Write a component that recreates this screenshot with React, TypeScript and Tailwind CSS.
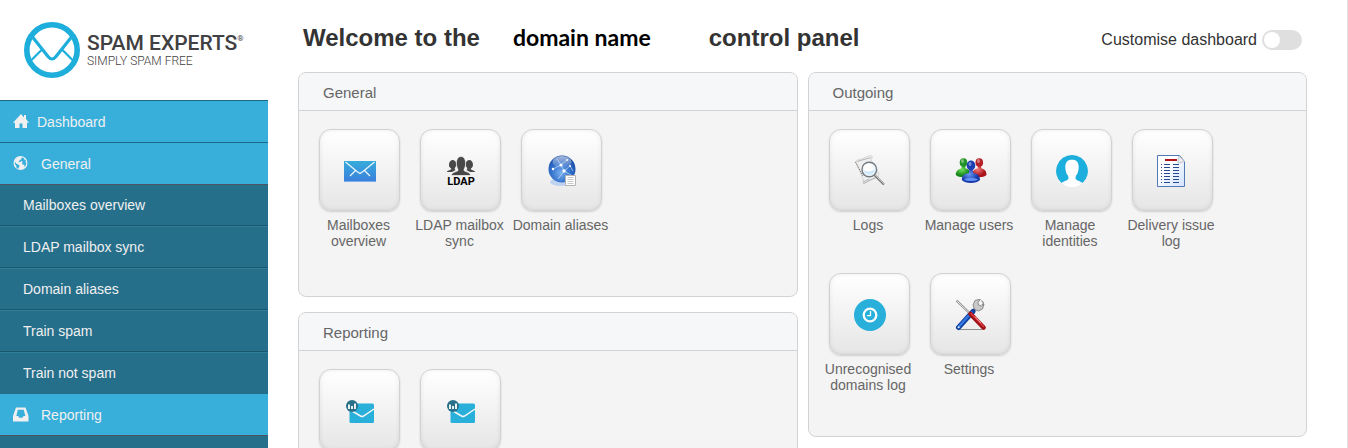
import { ReactNode, useState } from 'react'

type Tile = { label: string; icon: ReactNode }

const HomeIcon = () => (
  <svg viewBox="0 0 16 16" className="h-4 w-4" fill="currentColor">
    <path d="M8 0 0 8.700h2V14h4.500V9.500h3V14H14V8.700h2L13 5V1h-2v2.500z" />
  </svg>
)

const GlobeIcon = () => (
  <svg viewBox="0 0 16 16" className="h-4 w-4">
    <circle cx="7.500" cy="7" r="7" fill="#f0f0f0" />
    <g fill="#38afdb">
      <path d="M2 5.500 3 7.500l2 .8 1.500 1.500-.3 1.500-1 1 .2 1-1.700-1.200L3 9.500 1.800 8z" />
      <path d="M9 1.200 8.300 3 6.800 4.300 5.500 5.800l1.300.4L8.500 5l1.200.8L9 7.200l.5 1.300 1.800.3.300 2.400 1.300-2.200.5-2-1-1.200.6-1.500-1.500-.5-.4-1.500z" />
    </g>
  </svg>
)

const InboxIcon = () => (
  <svg viewBox="0 0 16 16" className="h-4 w-4" fill="currentColor" fillRule="evenodd">
    <path d="M3 .5h9.500L15.500 9v5.500H0V9zM4.800 2.800 3.300 9h1.900l1 1.800h3.300l1-1.800h1.900L10.700 2.800z" />
  </svg>
)

const MailIcon = () => (
  <svg viewBox="0 0 32 32" className="h-8 w-8">
    <defs>
      <linearGradient id="mail" x1="0" y1="0" x2="0" y2="1">
        <stop offset="0" stopColor="#35acdb" />
        <stop offset="1" stopColor="#3b7edb" />
      </linearGradient>
    </defs>
    <path d="M0 6h32v21H0z" fill="url(#mail)" />
    <path d="M0 26.500h32" stroke="#7fabe8" />
    <path d="M1.500 7 13 16.500l3 2 3-2L30.500 7M11.500 15.500 6 21M20.500 15.500 26 21" fill="none" stroke="#eef7fd" strokeWidth="1.200" />
  </svg>
)

const LdapIcon = () => (
  <svg viewBox="0 0 32 32" className="h-8 w-8">
    <g fill="#484848">
      <path d="M2 17c0-1.500 3-1.800 4.200-2.800.3-.6-.6-1.300-1.200-1.800C3 11 4 5 7.700 5c3.800 0 4.300 5.500 2.500 7.400-.8 1-.5 2 .4 2.600L7 17z" />
      <path d="M30 17c0-1.500-3-1.800-4.200-2.800-.3-.6.6-1.300 1.200-1.800C29 11 28 5 24.300 5c-3.800 0-4.300 5.500-2.500 7.400.8 1 .5 2-.4 2.600L25 17z" />
      <path d="M6.500 20.500c0-3.500 5-3.500 6.500-5 .4-.8-.6-2-1-3.200C10.800 9 11 1.500 16 1.500s5.200 7.500 4 10.800c-.4 1.200-1.400 2.400-1 3.200 1.500 1.500 6.500 1.500 6.500 5z" stroke="#f7f7f7" strokeWidth=".7" />
    </g>
    <text x="16" y="30" textAnchor="middle" fontSize="11" fontWeight="700" fontFamily="Roboto, sans-serif" fill="#000">
      LDAP
    </text>
  </svg>
)

const AliasIcon = () => (
  <svg viewBox="0 0 32 32" className="h-8 w-8">
    <defs>
      <radialGradient id="globe" cx=".45" cy=".65" r=".65">
        <stop offset="0" stopColor="#76aff0" />
        <stop offset=".55" stopColor="#3471cb" />
        <stop offset="1" stopColor="#174ba5" />
      </radialGradient>
      <linearGradient id="shine" x1="0" y1="0" x2="0" y2="1">
        <stop offset="0" stopColor="#fff" stopOpacity=".6" />
        <stop offset="1" stopColor="#fff" stopOpacity=".05" />
      </linearGradient>
    </defs>
    <ellipse cx="15" cy="27" rx="11" ry="4" fill="#bfd2f0" />
    <circle cx="16" cy="14" r="13.500" fill="url(#globe)" />
    <ellipse cx="16" cy="7" rx="9.500" ry="6" fill="url(#shine)" />
    <path d="M7 14l8-4 3 6 6-5M15 10l-4-6M15 10l6-5M18 16l-6 8M18 16l7 4M24 11l3 5" stroke="#d9e9ff" strokeWidth=".6" fill="none" />
    <g fill="#fff">
      <circle cx="15" cy="10" r="1.500" />
      <circle cx="18" cy="16" r="1.700" />
      <circle cx="7" cy="14" r="1.200" />
      <circle cx="24" cy="11" r="1" />
      <circle cx="21" cy="5" r=".9" />
    </g>
    <path d="M19.500 20.500h10v10h-10z" fill="#fff" stroke="#b5b5b5" />
    <path d="M21.500 22.500h6M21.500 24.500h6M21.500 26.500h6M21.500 28.500h6" stroke="#bbb" strokeWidth=".8" />
  </svg>
)

const LogsIcon = () => (
  <svg viewBox="0 0 32 32" className="h-8 w-8">
    <path d="M1.500 7C2 4.500 5 5 8 4l7-3.300c2-.7 3.500 0 3.200 2L17 5l8 14-1 3-9 3-4.500 3.500-1.500-.3.500-3.200z" fill="#efefef" stroke="#c8c8c8" strokeWidth=".7" />
    <path d="M1.500 7 9 21" stroke="#777" strokeWidth="1" strokeDasharray="1.500 1" />
    <path d="M3 6.500 17 2.500M9 27l6-3M9.500 28.500 23 22" stroke="#a8a8a8" strokeWidth=".8" />
    <path d="M20.500 20 30 29.500" stroke="#777" strokeWidth="2.200" />
    <path d="M21 20 30 29" stroke="#d5d5d5" strokeWidth=".8" />
    <circle cx="15.300" cy="14.500" r="7.300" fill="#eaf5fe" stroke="#747b80" strokeWidth="1.400" />
    <path d="M10 16a5.800 5.800 0 0 0 10.600 0c-3-1.500-7-1.500-10.600 0z" fill="#cfe8fb" />
    <ellipse cx="14.500" cy="12.500" rx="5" ry="4" fill="#fff" />
  </svg>
)

const UsersIcon = () => (
  <svg viewBox="0 0 32 32" className="h-8 w-8">
    <defs>
      <radialGradient id="green" cx=".4" cy=".35">
        <stop offset="0" stopColor="#72e35a" />
        <stop offset="1" stopColor="#15851a" />
      </radialGradient>
      <radialGradient id="red" cx=".4" cy=".35">
        <stop offset="0" stopColor="#f27b7b" />
        <stop offset="1" stopColor="#ac141c" />
      </radialGradient>
      <radialGradient id="blue" cx=".4" cy=".35">
        <stop offset="0" stopColor="#6b9cf5" />
        <stop offset="1" stopColor="#1537a8" />
      </radialGradient>
    </defs>
    <g fill="url(#green)">
      <path d="M.8 20c0-4 2.500-6 5.500-6.500l.7-3h3l.7 3c3 .5 5 2.500 5 6.500-3 3-12 3-14.900 0z" />
      <ellipse cx="8.500" cy="7.500" rx="3.800" ry="4.300" fill="#25952a" />
    </g>
    <g fill="url(#red)">
      <path d="M17 20c0-4 2.500-6 5.500-6.500l.7-3h2.600l.7 3c3 .5 5 2.500 5 6.500-3 3-11.500 3-14.500 0z" />
      <ellipse cx="24.300" cy="7.500" rx="3.800" ry="4.300" fill="#b5222a" />
    </g>
    <g fill="url(#blue)">
      <path d="M6.800 25c0-4.500 3-6.500 7-7l.5-3.500h3.400l.5 3.500c4 .5 6.800 2.500 6.800 7-3.500 4-14.700 4-18.200 0z" />
      <ellipse cx="16" cy="10.500" rx="4.300" ry="4.900" fill="#1d3fb4" />
    </g>
    <g fill="#fff" opacity=".4">
      <ellipse cx="7.500" cy="6" rx="1.500" ry="2" />
      <ellipse cx="23.500" cy="6" rx="1.500" ry="2" />
      <ellipse cx="15" cy="9" rx="1.500" ry="2" />
    </g>
    <path d="M9 24.500c3-2.500 11-2.500 14 0-3 2-11 2-14 0z" fill="#5f90f2" />
  </svg>
)

const IdentityIcon = () => (
  <svg viewBox="0 0 32 32" className="h-8 w-8">
    <circle cx="16" cy="16" r="16" fill="#fff" />
    <path d="M16 0a16 16 0 0 0-10.500 28c1.500-1.500 5.500-2.200 6.700-3.700.6-1 .2-2.600-.3-3.800-1.400-1-1.800-3-2.200-4.700C8.500 9 10 4.700 16 4.700s7.500 4.300 6.300 11.100c-.4 1.700-.8 3.700-2.200 4.700-.5 1.200-.9 2.800-.3 3.800 1.200 1.500 5.200 2.200 6.700 3.700A16 16 0 0 0 16 0z" fill="#1caedc" />
  </svg>
)

const DeliveryIcon = () => (
  <svg viewBox="0 0 32 32" className="h-8 w-8">
    <defs>
      <linearGradient id="sheet" x1="0" y1="0" x2="1" y2="1">
        <stop offset=".3" stopColor="#fff" />
        <stop offset="1" stopColor="#d2e3ff" />
      </linearGradient>
    </defs>
    <path d="M.5.5h22l5 6v25H.5z" fill="url(#sheet)" stroke="#5079b5" />
    <path d="M22 1c-.8 3-.8 5-1 7 2 0 4-1 6.500-1.500z" fill="#eee" stroke="#b5bac5" strokeWidth=".8" />
    <path d="M8 5h12" stroke="#b5121b" strokeWidth="2" />
    <path d="M7 9.500h6M16 9.500h6M7 12.500h6M16 12.500h6M7 15.500h6M16 15.500h6M7 18.500h6M16 18.500h6M7 21.500h6M16 21.500h6M7 24.500h6M16 24.500h6M7 27.500h6M16 27.500h6M4 9.500h1M4 12.500h1M4 15.500h1M4 18.500h1M4 21.500h1M4 24.500h1M4 27.500h1" stroke="#274a8c" />
  </svg>
)

const ClockIcon = () => (
  <svg viewBox="0 0 32 32" className="h-8 w-8">
    <circle cx="16" cy="16" r="16" fill="#28afda" />
    <circle cx="16" cy="16" r="6.300" fill="none" stroke="#fff" strokeWidth="2.300" />
    <path d="M16.500 12v4.700H13" fill="none" stroke="#fff" strokeWidth="1.300" />
  </svg>
)

const ToolsIcon = () => (
  <svg viewBox="0 0 32 32" className="h-8 w-8">
    <path d="M5 30.500h22" stroke="#777" strokeWidth=".8" />
    <path d="M16 14.500 22 8" stroke="#8c8c8c" strokeWidth="3" />
    <path d="M25.500 0 20 1.500 18 6l1.500 4.500 4 1.500 4-2L29 5l-2.500 2-3-1-.5-2.500z" fill="#c9c9c9" stroke="#777" strokeWidth=".8" />
    <path d="M26.500 1.500 28.500 4l-1.500 2" fill="none" stroke="#888" strokeWidth="1.200" />
    <path d="M3.500 28.500 18 12.500" stroke="#123f9d" strokeWidth="5" strokeLinecap="round" />
    <path d="M3.500 28 16.500 13.500" stroke="#3478e6" strokeWidth="2.500" strokeLinecap="round" />
    <circle cx="3.700" cy="28.300" r="1" fill="#dbe9ff" />
    <path d="M1.500 1.500 15 14.500" stroke="#858585" strokeWidth="2.200" />
    <path d="M1.500 1.500 15 14.500" stroke="#eee" strokeWidth="1" />
    <path d="M15.500 15 28.500 28.500" stroke="#9c1016" strokeWidth="4.600" strokeLinecap="round" />
    <path d="M16 14.500 28.500 27.500" stroke="#e0383e" strokeWidth="1.500" strokeLinecap="round" />
    <path d="M20 17.500l6 6.500" stroke="#fbb" strokeWidth=".8" />
  </svg>
)

const ReportIcon = () => (
  <svg viewBox="0 0 32 32" className="h-8 w-8">
    <rect x="5.500" y="8.500" width="24.500" height="19.500" rx="1.500" fill="#28afda" />
    <path d="M5.500 14.500 16.500 21q1.500.9 3 0L30 14" fill="none" stroke="#f5f5f5" strokeWidth="1.500" />
    <circle cx="8" cy="11" r="6" fill="#2a7089" />
    <path d="M5 14V9.500M8 14v-3M11 14V8.500" stroke="#fff" strokeWidth="1.800" />
  </svg>
)

const subItems = ['Mailboxes overview', 'LDAP mailbox sync', 'Domain aliases', 'Train spam', 'Train not spam']

const generalTiles: Tile[] = [
  { label: 'Mailboxes overview', icon: <MailIcon /> },
  { label: 'LDAP mailbox sync', icon: <LdapIcon /> },
  { label: 'Domain aliases', icon: <AliasIcon /> }
]

const reportingTiles: Tile[] = [
  { label: '', icon: <ReportIcon /> },
  { label: '', icon: <ReportIcon /> }
]

const outgoingTiles: Tile[] = [
  { label: 'Logs', icon: <LogsIcon /> },
  { label: 'Manage users', icon: <UsersIcon /> },
  { label: 'Manage identities', icon: <IdentityIcon /> },
  { label: 'Delivery issue log', icon: <DeliveryIcon /> },
  { label: 'Unrecognised domains log', icon: <ClockIcon /> },
  { label: 'Settings', icon: <ToolsIcon /> }
]

function Logo() {
  return (
    <a href="#" className="flex h-[100px] items-center gap-[7px] bg-white pl-6 whitespace-nowrap">
      <svg viewBox="0 0 56 56" className="h-14 w-14 shrink-0" fill="none" stroke="#1eaedb">
        <circle cx="28" cy="28" r="25.200" strokeWidth="5.600" />
        <path d="M8.500 15 24 34.500q4 5 8 0L47.500 15" strokeWidth="3.200" />
        <path d="M17.500 28 7.500 38M38.500 28l10 10" strokeWidth="2.200" />
      </svg>
      <span className="flex flex-col pt-[2px] font-[Roboto,sans-serif]">
        <span className="flex text-[21px] leading-5 font-medium text-[#414042]">
          SPAM EXPERTS<span className="text-[8px] leading-3 font-normal">®</span>
        </span>
        <span className="text-xs leading-4 font-light text-[#414042]">SIMPLY SPAM FREE</span>
      </span>
    </a>
  )
}

function Panel({ title, tiles }: { title: string; tiles: Tile[] }) {
  return (
    <section className="min-h-[225px] overflow-hidden rounded-lg border border-[#d3d3d3] bg-[#f4f4f4]">
      <h2 className="border-b border-[#d3d3d3] bg-[#f5f7f9] px-6 pt-[10px] pb-[7px] text-[15px] leading-5 text-[#666]">
        {title}
      </h2>
      <div className="flex flex-wrap px-[10px] pt-[18px] pb-[19px]">
        {tiles.map(({ label, icon }, index) => (
          <a
            href="#"
            key={index}
            className="flex min-h-36 w-[101px] flex-col items-center text-center text-sm leading-4 text-[#666]"
          >
            <span className="mb-[6px] flex h-[82px] w-[81px] items-center justify-center rounded-xl border border-[#d2d2d2] bg-linear-to-b from-white to-[#e6e6e6] pt-[2px] pl-px shadow-[0_1px_2px_rgba(0,0,0,0.15),inset_0_0_5px_rgba(0,0,0,0.08)]">
              {icon}
            </span>
            <span className="pr-[2px]">{label}</span>
          </a>
        ))}
      </div>
    </section>
  )
}

export default function App() {
  const [customise, setCustomise] = useState(false)

  return (
    <div className="flex h-screen overflow-hidden bg-white font-['Liberation_Sans',Arial,sans-serif]">
      <aside className="w-[268px] shrink-0 bg-[#266f8b] text-sm text-[#f0f0f0]">
        <Logo />
        <nav>
          <a href="#" className="flex h-[42px] items-center gap-2 border-t border-[#1c6a87] bg-[#38afdb] pt-px pl-[13px]">
            <HomeIcon />
            Dashboard
          </a>
          <a href="#" className="flex h-[42px] items-center gap-3 border-t border-[#1c6a87] bg-[#38afdb] pt-px pl-[13px]">
            <GlobeIcon />
            General
          </a>
          <ul className="divide-y divide-[#1a5870] border-t border-[#4f5560]">
            {subItems.map((item, index) => (
              <li key={item} className="last:pb-px">
                <a
                  href="#"
                  className={`flex items-center pl-[23px] ${index === 0 ? 'h-10' : 'h-[41px] border-t border-[#2f7e9b]'}`}
                >
                  {item}
                </a>
              </li>
            ))}
          </ul>
          <a href="#" className="flex h-[42px] items-center gap-3 border-b border-[#4f5560] bg-[#38afdb] pl-[13px]">
            <InboxIcon />
            Reporting
          </a>
        </nav>
      </aside>

      <main className="min-w-0 flex-1 border-r border-[#e5e5e5] pr-10 pl-[30px]">
        <header className="flex h-[72px] items-center justify-between px-[5px]">
          <h1 className="flex items-baseline pt-[2px] text-2xl font-bold text-[#333]">
            Welcome to the
            <span className="mr-[58px] ml-[33px] font-[Lato,sans-serif] text-[23px] leading-8 text-black">domain name</span>
            control panel
          </h1>
          <label className="mt-2 flex items-center gap-[5px] text-base leading-5 text-[#333]">
            Customise dashboard
            <input
              type="checkbox"
              role="switch"
              checked={customise}
              onChange={(event) => setCustomise(event.target.checked)}
              className="h-5 w-10 appearance-none rounded-full bg-[#dfdfdf] p-[2px] before:block before:size-4 before:rounded-full before:bg-white checked:bg-[#38afdb] checked:before:ml-5"
            />
          </label>
        </header>

        <div className="grid grid-cols-2 items-start gap-[10px]">
          <div className="flex flex-col gap-[15px]">
            <Panel title="General" tiles={generalTiles} />
            <Panel title="Reporting" tiles={reportingTiles} />
          </div>
          <Panel title="Outgoing" tiles={outgoingTiles} />
        </div>
      </main>
    </div>
  )
}
